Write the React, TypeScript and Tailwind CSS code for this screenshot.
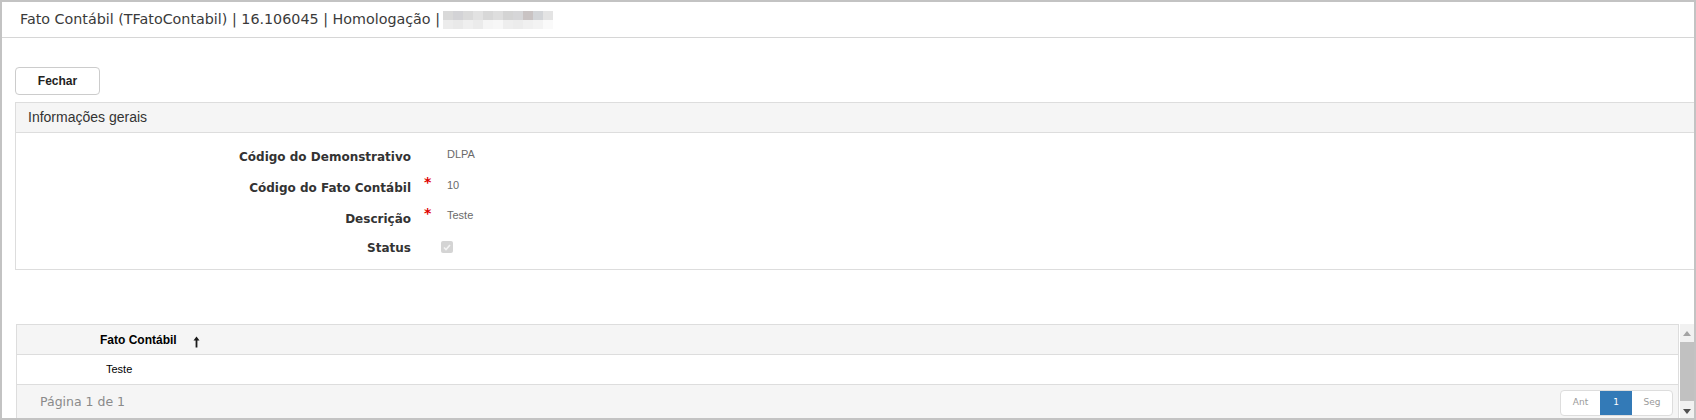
import React from 'react'

const blurTop = ['bg-[#d9d9d9]', 'bg-[#d3d3d6]', 'bg-[#dadada]', 'bg-[#e2e2e2]', 'bg-[#d8d8d8]', 'bg-[#dedede]', 'bg-[#d4d4d4]', 'bg-[#d6d6d8]', 'bg-[#c9c3c3]', 'bg-[#d3d5d8]', 'bg-[#e4e4e4]']
const blurBottom = ['bg-[#ececec]', 'bg-[#e9e9e9]', 'bg-[#efefef]', 'bg-[#ebebeb]', 'bg-[#f5f5f5]', 'bg-[#f7f7f7]', 'bg-[#eeeeee]', 'bg-[#ececec]', 'bg-[#f0f0f0]', 'bg-[#f3f3f3]', 'bg-[#fafafa]']

const verdana = "font-['DejaVu_Sans',Verdana,sans-serif]"
const arial = "font-['Liberation_Sans',Arial,sans-serif]"

type Field = { label: string; value?: string; required?: boolean; check?: boolean; h: string }

const fields: Field[] = [
    { label: 'Código do Demonstrativo', value: 'DLPA', h: 'h-[31px]' },
    { label: 'Código do Fato Contábil', value: '10', required: true, h: 'h-[31px]' },
    { label: 'Descrição', value: 'Teste', required: true, h: 'h-[30px]' },
    { label: 'Status', check: true, h: 'h-[28px]' },
]

const Blurred = () => (
    <div className="ml-[3px] flex flex-col">
        <div className="flex">
            {blurTop.map((c, i) => <div key={i} className={`h-[9px] w-[10px] ${c}`} />)}
        </div>
        <div className="flex">
            {blurBottom.map((c, i) => <div key={i} className={`h-[9px] w-[10px] ${c}`} />)}
        </div>
    </div>
)

const SortArrow = () => (
    <svg width="7" height="12" viewBox="0 0 7 12" className="ml-[16px] mt-[4px]">
        <path d="M3.5 0.5 L6.5 4.5 L4.4 4.5 L4.4 11.5 L2.6 11.5 L2.6 4.5 L0.5 4.5 Z" fill="#1a1a1a" />
    </svg>
)

const Scrollbar = () => (
    <div className="ml-[1px] flex w-[14px] flex-col bg-[#f1f1f1]">
        <div className="flex h-[18px] items-center justify-center">
            <svg width="8" height="5" viewBox="0 0 8 5"><path d="M4 0 L8 5 L0 5 Z" fill="#a3a3a3" /></svg>
        </div>
        <div className="h-[59px] bg-[#c1c1c1]" />
        <div className="flex h-[18px] items-end justify-center pb-[5px]">
            <svg width="8" height="5" viewBox="0 0 8 5"><path d="M0 0 L8 0 L4 5 Z" fill="#505050" /></svg>
        </div>
    </div>
)

export default function App() {
    return (
        <div className="h-[420px] w-full overflow-hidden border-2 border-[#c3c3c3] bg-white">
            <div className="flex h-[36px] items-center border-b border-[#d6d6d6] pl-[18px]">
                <span className={`${verdana} text-[14.3px] text-[#3a3a3a]`}>Fato Contábil (TFatoContabil) | 16.106045 | Homologação |</span>
                <Blurred />
            </div>

            <div className="pl-[13px]">
                <button className={`${arial} mt-[29px] h-[28px] w-[85px] rounded-[4px] border border-[#cccccc] bg-white text-[12px] font-bold text-[#222]`}>
                    Fechar
                </button>

                <div className="mt-[7px] border border-r-0 border-[#dddddd]">
                    <div className={`${arial} flex h-[30px] items-center border-b border-[#dddddd] bg-[#f5f5f5] pl-[12px] text-[14px] text-[#333]`}>
                        Informações gerais
                    </div>
                    <div className="pt-[7px] pb-[9px]">
                        {fields.map((f) => (
                            <div key={f.label} className={`flex items-center ${f.h}`}>
                                <div className={`${verdana} mt-[3px] w-[395px] text-right text-[12px] font-bold text-[#333]`}>{f.label}</div>
                                <div className="h-full w-[36px] pl-[13px]">
                                    {f.required && <span className={`${verdana} block pt-[4px] text-[14px] font-bold leading-none text-[#e00000]`}>*</span>}
                                </div>
                                {f.check ? (
                                    <div className="mt-[2px] -ml-[6px] flex h-[12px] w-[12px] items-center justify-center rounded-[2px] bg-[#d4d4d4]">
                                        <svg width="8" height="7" viewBox="0 0 8 7"><path d="M1 3.5 L3 5.5 L7 1" fill="none" stroke="#f4f4f4" strokeWidth="1.6" /></svg>
                                    </div>
                                ) : (
                                    <div className={`${arial} -mt-[3px] text-[11px] text-[#6a6a6a]`}>{f.value}</div>
                                )}
                            </div>
                        ))}
                    </div>
                </div>

                <div className="mt-[54px] flex">
                    <div className="ml-[1px] flex-1 border-x border-t border-[#dddddd]">
                        <div className="flex h-[30px] items-center border-b border-[#dddddd] bg-[#f5f5f5] pl-[83px]">
                            <span className={`${arial} text-[12px] font-bold text-black`}>Fato Contábil</span>
                            <SortArrow />
                        </div>
                        <div className={`${arial} flex h-[29px] items-center pl-[89px] text-[11px] text-black`}>Teste</div>
                        <div className="flex h-[40px] items-start justify-between border-t border-[#dddddd] bg-[#f5f5f5] pt-[5px] pr-[5px] pl-[23px]">
                            <span className={`${verdana} mt-[3px] text-[12.5px] text-[#8a8a8a]`}>Página 1 de 1</span>
                            <div className={`${verdana} flex h-[26px] overflow-hidden rounded-[4px] border border-[#dddddd] bg-white text-[9px]`}>
                                <div className="flex w-[39px] items-center justify-center text-[#9a9a9a]">Ant</div>
                                <div className="flex w-[32px] items-center justify-center bg-[#337ab7] text-white">1</div>
                                <div className="flex w-[40px] items-center justify-center text-[#9a9a9a]">Seg</div>
                            </div>
                        </div>
                    </div>
                    <Scrollbar />
                </div>
            </div>
        </div>
    )
}
